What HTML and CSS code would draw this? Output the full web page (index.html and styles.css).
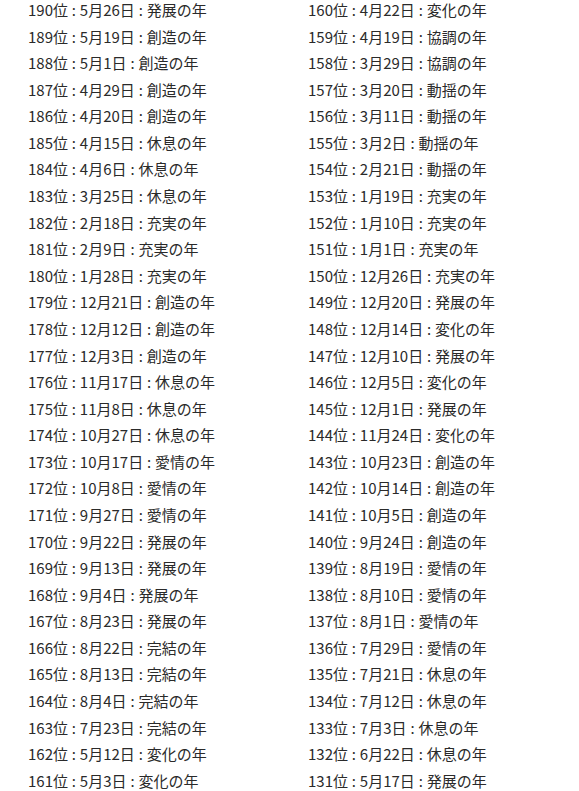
FILE: index.html
```html
<!DOCTYPE html>
<html lang="ja">
<head>
<meta charset="utf-8">
<link rel="stylesheet" href="styles.css">
</head>
<body>
<div class="ranking">
<ul class="col">
<li>190位 : 5月26日 : 発展の年</li>
<li>189位 : 5月19日 : 創造の年</li>
<li>188位 : 5月1日 : 創造の年</li>
<li>187位 : 4月29日 : 創造の年</li>
<li>186位 : 4月20日 : 創造の年</li>
<li>185位 : 4月15日 : 休息の年</li>
<li>184位 : 4月6日 : 休息の年</li>
<li>183位 : 3月25日 : 休息の年</li>
<li>182位 : 2月18日 : 充実の年</li>
<li>181位 : 2月9日 : 充実の年</li>
<li>180位 : 1月28日 : 充実の年</li>
<li>179位 : 12月21日 : 創造の年</li>
<li>178位 : 12月12日 : 創造の年</li>
<li>177位 : 12月3日 : 創造の年</li>
<li>176位 : 11月17日 : 休息の年</li>
<li>175位 : 11月8日 : 休息の年</li>
<li>174位 : 10月27日 : 休息の年</li>
<li>173位 : 10月17日 : 愛情の年</li>
<li>172位 : 10月8日 : 愛情の年</li>
<li>171位 : 9月27日 : 愛情の年</li>
<li>170位 : 9月22日 : 発展の年</li>
<li>169位 : 9月13日 : 発展の年</li>
<li>168位 : 9月4日 : 発展の年</li>
<li>167位 : 8月23日 : 発展の年</li>
<li>166位 : 8月22日 : 完結の年</li>
<li>165位 : 8月13日 : 完結の年</li>
<li>164位 : 8月4日 : 完結の年</li>
<li>163位 : 7月23日 : 完結の年</li>
<li>162位 : 5月12日 : 変化の年</li>
<li>161位 : 5月3日 : 変化の年</li>
</ul>
<ul class="col">
<li>160位 : 4月22日 : 変化の年</li>
<li>159位 : 4月19日 : 協調の年</li>
<li>158位 : 3月29日 : 協調の年</li>
<li>157位 : 3月20日 : 動揺の年</li>
<li>156位 : 3月11日 : 動揺の年</li>
<li>155位 : 3月2日 : 動揺の年</li>
<li>154位 : 2月21日 : 動揺の年</li>
<li>153位 : 1月19日 : 充実の年</li>
<li>152位 : 1月10日 : 充実の年</li>
<li>151位 : 1月1日 : 充実の年</li>
<li>150位 : 12月26日 : 充実の年</li>
<li>149位 : 12月20日 : 発展の年</li>
<li>148位 : 12月14日 : 変化の年</li>
<li>147位 : 12月10日 : 発展の年</li>
<li>146位 : 12月5日 : 変化の年</li>
<li>145位 : 12月1日 : 発展の年</li>
<li>144位 : 11月24日 : 変化の年</li>
<li>143位 : 10月23日 : 創造の年</li>
<li>142位 : 10月14日 : 創造の年</li>
<li>141位 : 10月5日 : 創造の年</li>
<li>140位 : 9月24日 : 創造の年</li>
<li>139位 : 8月19日 : 愛情の年</li>
<li>138位 : 8月10日 : 愛情の年</li>
<li>137位 : 8月1日 : 愛情の年</li>
<li>136位 : 7月29日 : 愛情の年</li>
<li>135位 : 7月21日 : 休息の年</li>
<li>134位 : 7月12日 : 休息の年</li>
<li>133位 : 7月3日 : 休息の年</li>
<li>132位 : 6月22日 : 休息の年</li>
<li>131位 : 5月17日 : 発展の年</li>
</ul>
</div>
</body>
</html>
```
FILE: styles.css
```css
html, body {
  margin: 0;
  padding: 0;
  background: #ffffff;
}
body {
  font-family: "Noto Sans CJK JP", "Noto Sans", sans-serif;
  font-size: 15px;
  color: #2a2a2a;
  overflow: hidden;
}
.ranking {
  display: grid;
  grid-template-columns: 280px 1fr;
  padding-left: 28px;
  margin-top: -3px;
}
.col {
  list-style: none;
  margin: 0;
  padding: 0;
}
.col li {
  line-height: 26.58px;
  height: 26.58px;
  white-space: nowrap;
  word-spacing: 0.5px;
}
```
